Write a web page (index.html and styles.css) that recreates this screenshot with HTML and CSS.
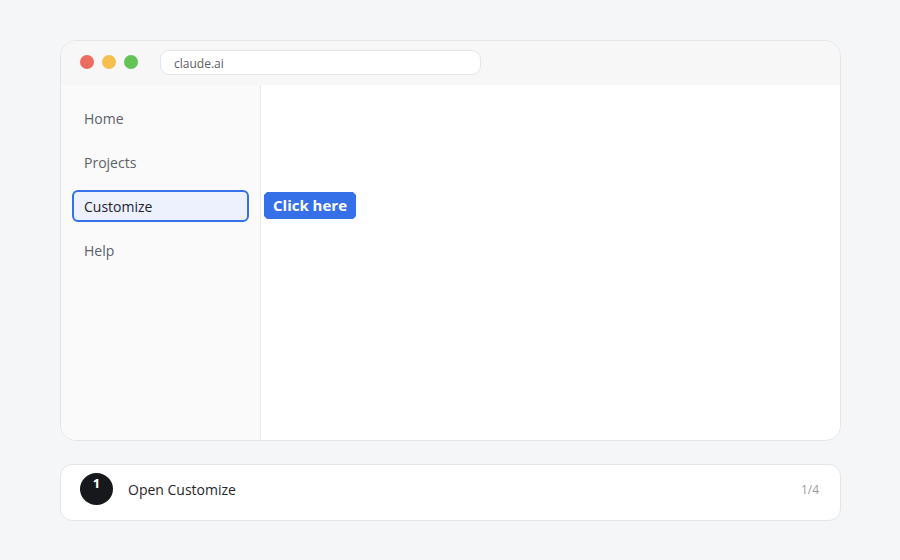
FILE: index.html
```html
<!DOCTYPE html>
<html>
<head>
<meta charset="utf-8">
<link rel="stylesheet" href="styles.css">
</head>
<body>
<div class="page">
  <div class="window">
    <div class="titlebar">
      <div class="lights">
        <span class="dot red"></span>
        <span class="dot yellow"></span>
        <span class="dot green"></span>
      </div>
      <div class="address">claude.ai</div>
    </div>
    <div class="body">
      <nav class="sidebar">
        <div class="item">Home</div>
        <div class="item">Projects</div>
        <div class="item active">Customize
          <span class="badge">Click here</span>
        </div>
        <div class="item">Help</div>
      </nav>
      <main class="content"></main>
    </div>
  </div>
  <div class="step">
    <span class="num">1</span>
    <span class="label">Open Customize</span>
    <span class="count">1/4</span>
  </div>
</div>
</body>
</html>
```
FILE: styles.css
```css
* { box-sizing: border-box; }
html, body { margin: 0; padding: 0; }
body {
  background: #f5f6f8;
  font-family: "Open Sans", "Noto Sans", sans-serif;
  width: 900px;
  height: 560px;
  overflow: hidden;
}
.page {
  padding: 40px 59px 0 60px;
  display: flex;
  flex-direction: column;
  gap: 23px;
}
.window {
  height: 401px;
  border: 1px solid #e4e5e9;
  border-radius: 16px;
  overflow: hidden;
  background: #fff;
  display: flex;
  flex-direction: column;
}
.titlebar {
  height: 44px;
  background: #f7f7f8;
  display: flex;
  align-items: flex-start;
  padding: 9px 0 0 19px;
  gap: 22px;
  flex-shrink: 0;
}
.lights { display: flex; gap: 8px; padding-top: 5px; }
.dot { width: 14px; height: 14px; border-radius: 50%; display: block; }
.red { background: #ee6b60; }
.yellow { background: #f4bf4f; }
.green { background: #61c454; }
.address {
  width: 321px;
  height: 25px;
  background: #fff;
  border: 1px solid #e4e5e9;
  border-radius: 9px;
  font-size: 12px;
  color: #5b5e66;
  padding: 6px 0 0 13px;
  line-height: 14px;
}
.body { flex: 1; display: flex; }
.sidebar {
  width: 200px;
  background: #fafafa;
  border-right: 1px solid #e7e8eb;
  padding: 17px 11px 0 11px;
  display: flex;
  flex-direction: column;
  gap: 12px;
}
.item {
  position: relative;
  height: 32px;
  padding: 0 0 0 10px;
  font-size: 14px;
  line-height: 30px;
  color: #5d6169;
  border: 2px solid transparent;
  border-radius: 6px;
}
.item.active {
  background: #edf1fe;
  border-color: #3571e8;
  color: #1f2229;
}
.badge {
  position: absolute;
  left: 190px;
  top: 0px;
  height: 27px;
  padding: 0 9px;
  background: #3570e8;
  color: #fff;
  font-weight: 700;
  font-size: 15px;
  line-height: 27px;
  white-space: nowrap;
  clip-path: polygon(3px 0, calc(100% - 3px) 0, 100% 3px, 100% calc(100% - 3px), calc(100% - 3px) 100%, 3px 100%, 0 calc(100% - 3px), 0 3px);
}
.content { flex: 1; background: #fff; }
.step {
  height: 57px;
  background: #fff;
  border: 1px solid #e4e5e9;
  border-radius: 12px;
  display: flex;
  align-items: center;
  padding: 0 21px 7px 19px;
}
.num {
  width: 33px;
  height: 32px;
  border-radius: 50%;
  background: #17181c;
  color: #fff;
  font-size: 13px;
  font-weight: 700;
  text-align: center;
  line-height: 21px;
  flex-shrink: 0;
}
.label {
  margin-left: 15px;
  font-size: 14px;
  color: #25272d;
  flex: 1;
}
.count { font-size: 12px; color: #9a9ca3; }
```
